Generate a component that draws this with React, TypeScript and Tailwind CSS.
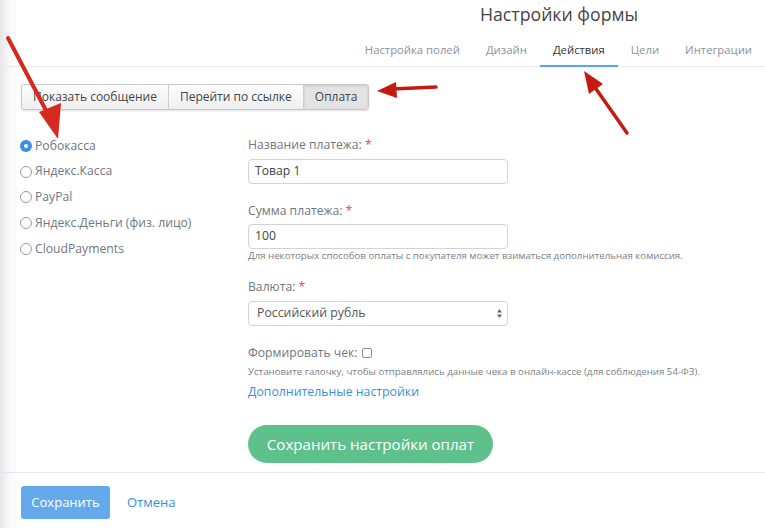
import React from "react";

function Radio({ checked, label }: { checked?: boolean; label: string }) {
  return (
    <div className="flex items-center h-[25.75px]">
      {checked ? (
        <span className="w-[12px] h-[12px] rounded-full bg-[#3b8ee8] flex items-center justify-center">
          <span className="w-[4px] h-[4px] rounded-full bg-white" />
        </span>
      ) : (
        <span className="w-[12px] h-[12px] rounded-full border border-[#9a9a9a] bg-white" />
      )}
      <span className="ml-[3px] text-[12.2px] text-[#6f7780]">{label}</span>
    </div>
  );
}

function Label({ text, req }: { text: string; req?: boolean }) {
  return (
    <div className="text-[12.2px] leading-[18px] text-[#6f7780]">
      {text}
      {req && <span className="text-[#e05050]"> *</span>}
    </div>
  );
}

export default function App() {
  return (
    <div className="relative w-[765px] h-[528px] overflow-hidden bg-[linear-gradient(to_right,#e6e6e6,#fafafa_10px,#ffffff_20px)] font-['Open_Sans',sans-serif]">
      {/* header */}
      <div className="pl-[480px] pt-[2px] text-[17.7px] leading-[24px] text-[#444]">Настройки формы</div>
      <div className="mt-[13px] flex justify-end border-b border-[#e6eaee] h-[28px] text-[11.3px]">
        {["Настройка полей", "Дизайн", "Действия", "Цели", "Интеграции"].map((t) => (
          <div
            key={t}
            className={
              "px-[13px] pt-[2px] h-[28px] leading-[18px] " +
              (t === "Действия" ? "text-[#333] border-b-2 border-[#5aa6ec]" : "text-[#8a949d]")
            }
          >
            {t}
          </div>
        ))}
      </div>

      {/* button group */}
      <div className="pl-[21px] pt-[16px]">
        <div className="inline-flex h-[26px] rounded-[3px] border border-[#c8c8c8] shadow-[0_1px_2px_rgba(0,0,0,0.12)] overflow-hidden text-[12px] text-[#444]">
          <div className="px-[11px] flex items-center bg-[linear-gradient(#fdfdfd,#efefef)] border-r border-[#cfcfcf]">Показать сообщение</div>
          <div className="px-[11px] flex items-center bg-[linear-gradient(#fdfdfd,#efefef)] border-r border-[#cfcfcf]">Перейти по ссылке</div>
          <div className="px-[11px] flex items-center bg-[#e3e3e3] shadow-[inset_0_1px_3px_rgba(0,0,0,0.12)]">Оплата</div>
        </div>
      </div>

      {/* content */}
      <div className="flex pt-[23px]">
        <div className="w-[248px] pl-[20px] flex flex-col">
          <Radio checked label="Робокасса" />
          <Radio label="Яндекс.Касса" />
          <Radio label="PayPal" />
          <Radio label="Яндекс.Деньги (физ. лицо)" />
          <Radio label="CloudPayments" />
        </div>
        <div className="flex flex-col pt-[3px]">
          <Label text="Название платежа:" req />
          <div className="mt-[5px] w-[260px] h-[25px] rounded-[4px] border border-[#d3d3d3] flex items-center px-[6px] text-[12.2px] text-[#444]">Товар 1</div>
          <div className="mt-[18px]"><Label text="Сумма платежа:" req /></div>
          <div className="mt-[4px] w-[260px] h-[25px] rounded-[4px] border border-[#d3d3d3] flex items-center px-[6px] text-[12.2px] text-[#444]">100</div>
          <div className="text-[9.7px] leading-[14px] text-[#7a7f85]">Для некоторых способов оплаты с покупателя может взиматься дополнительная комиссия.</div>
          <div className="mt-[15px]"><Label text="Валюта:" req /></div>
          <div className="mt-[5px] w-[260px] h-[25px] rounded-[4px] border border-[#d3d3d3] flex items-center justify-between pl-[8px] pr-[4px] text-[12.3px] text-[#555]">
            <span>Российский рубль</span>
            <svg width="7" height="11" viewBox="0 0 7 11">
              <path d="M3.5 1 L6 4.5 L1 4.5 Z" fill="#666" />
              <path d="M3.5 10 L6 6.5 L1 6.5 Z" fill="#666" />
            </svg>
          </div>
          <div className="mt-[18px] flex items-center text-[12.2px] leading-[18px] text-[#6f7780]">
            Формировать чек:
            <span className="ml-[4px] w-[10px] h-[10px] rounded-[2px] border border-[#8a8a8a] bg-white" />
          </div>
          <div className="mt-[3px] text-[9.7px] leading-[14px] text-[#7a7f85]">Установите галочку, чтобы отправлялись данные чека в онлайн-кассе (для соблюдения 54-ФЗ).</div>
          <div className="mt-[4px] text-[12.3px] leading-[18px] text-[#3a8fdc]">Дополнительные настройки</div>
          <div className="mt-[24px] w-[245px] h-[38px] rounded-full bg-[#5ec08b] flex items-center justify-center text-[15.1px] text-white">Сохранить настройки оплат</div>
        </div>
      </div>

      {/* footer */}
      <div className="mt-[9px] border-t border-[#e4e8ec] pl-[21px] pt-[13px] flex items-center">
        <div className="w-[89px] h-[33px] rounded-[3px] bg-[#64a9ec] flex items-center justify-center text-[13px] text-white">Сохранить</div>
        <div className="ml-[17px] text-[13px] text-[#3a8fdc]">Отмена</div>
      </div>

      {/* arrows overlay */}
      <svg className="absolute left-0 top-0 pointer-events-none" width="765" height="528">
        <g stroke="#d42a1f" strokeWidth="4" strokeLinecap="round" fill="#d42a1f">
          <line x1="8" y1="38" x2="50" y2="118" />
          <polygon points="58,139 39,112 61,103" stroke="none" />
          <line x1="436" y1="87" x2="392" y2="89" strokeWidth="3.5" stroke="#c41a10" />
          <polygon points="377,91 396,82 397,98" stroke="none" fill="#c41a10" />
          <line x1="627" y1="133" x2="594" y2="86" strokeWidth="3.5" stroke="#c41a10" />
          <polygon points="584,71 603,84 589,94" stroke="none" fill="#c41a10" />
        </g>
      </svg>
    </div>
  );
}
